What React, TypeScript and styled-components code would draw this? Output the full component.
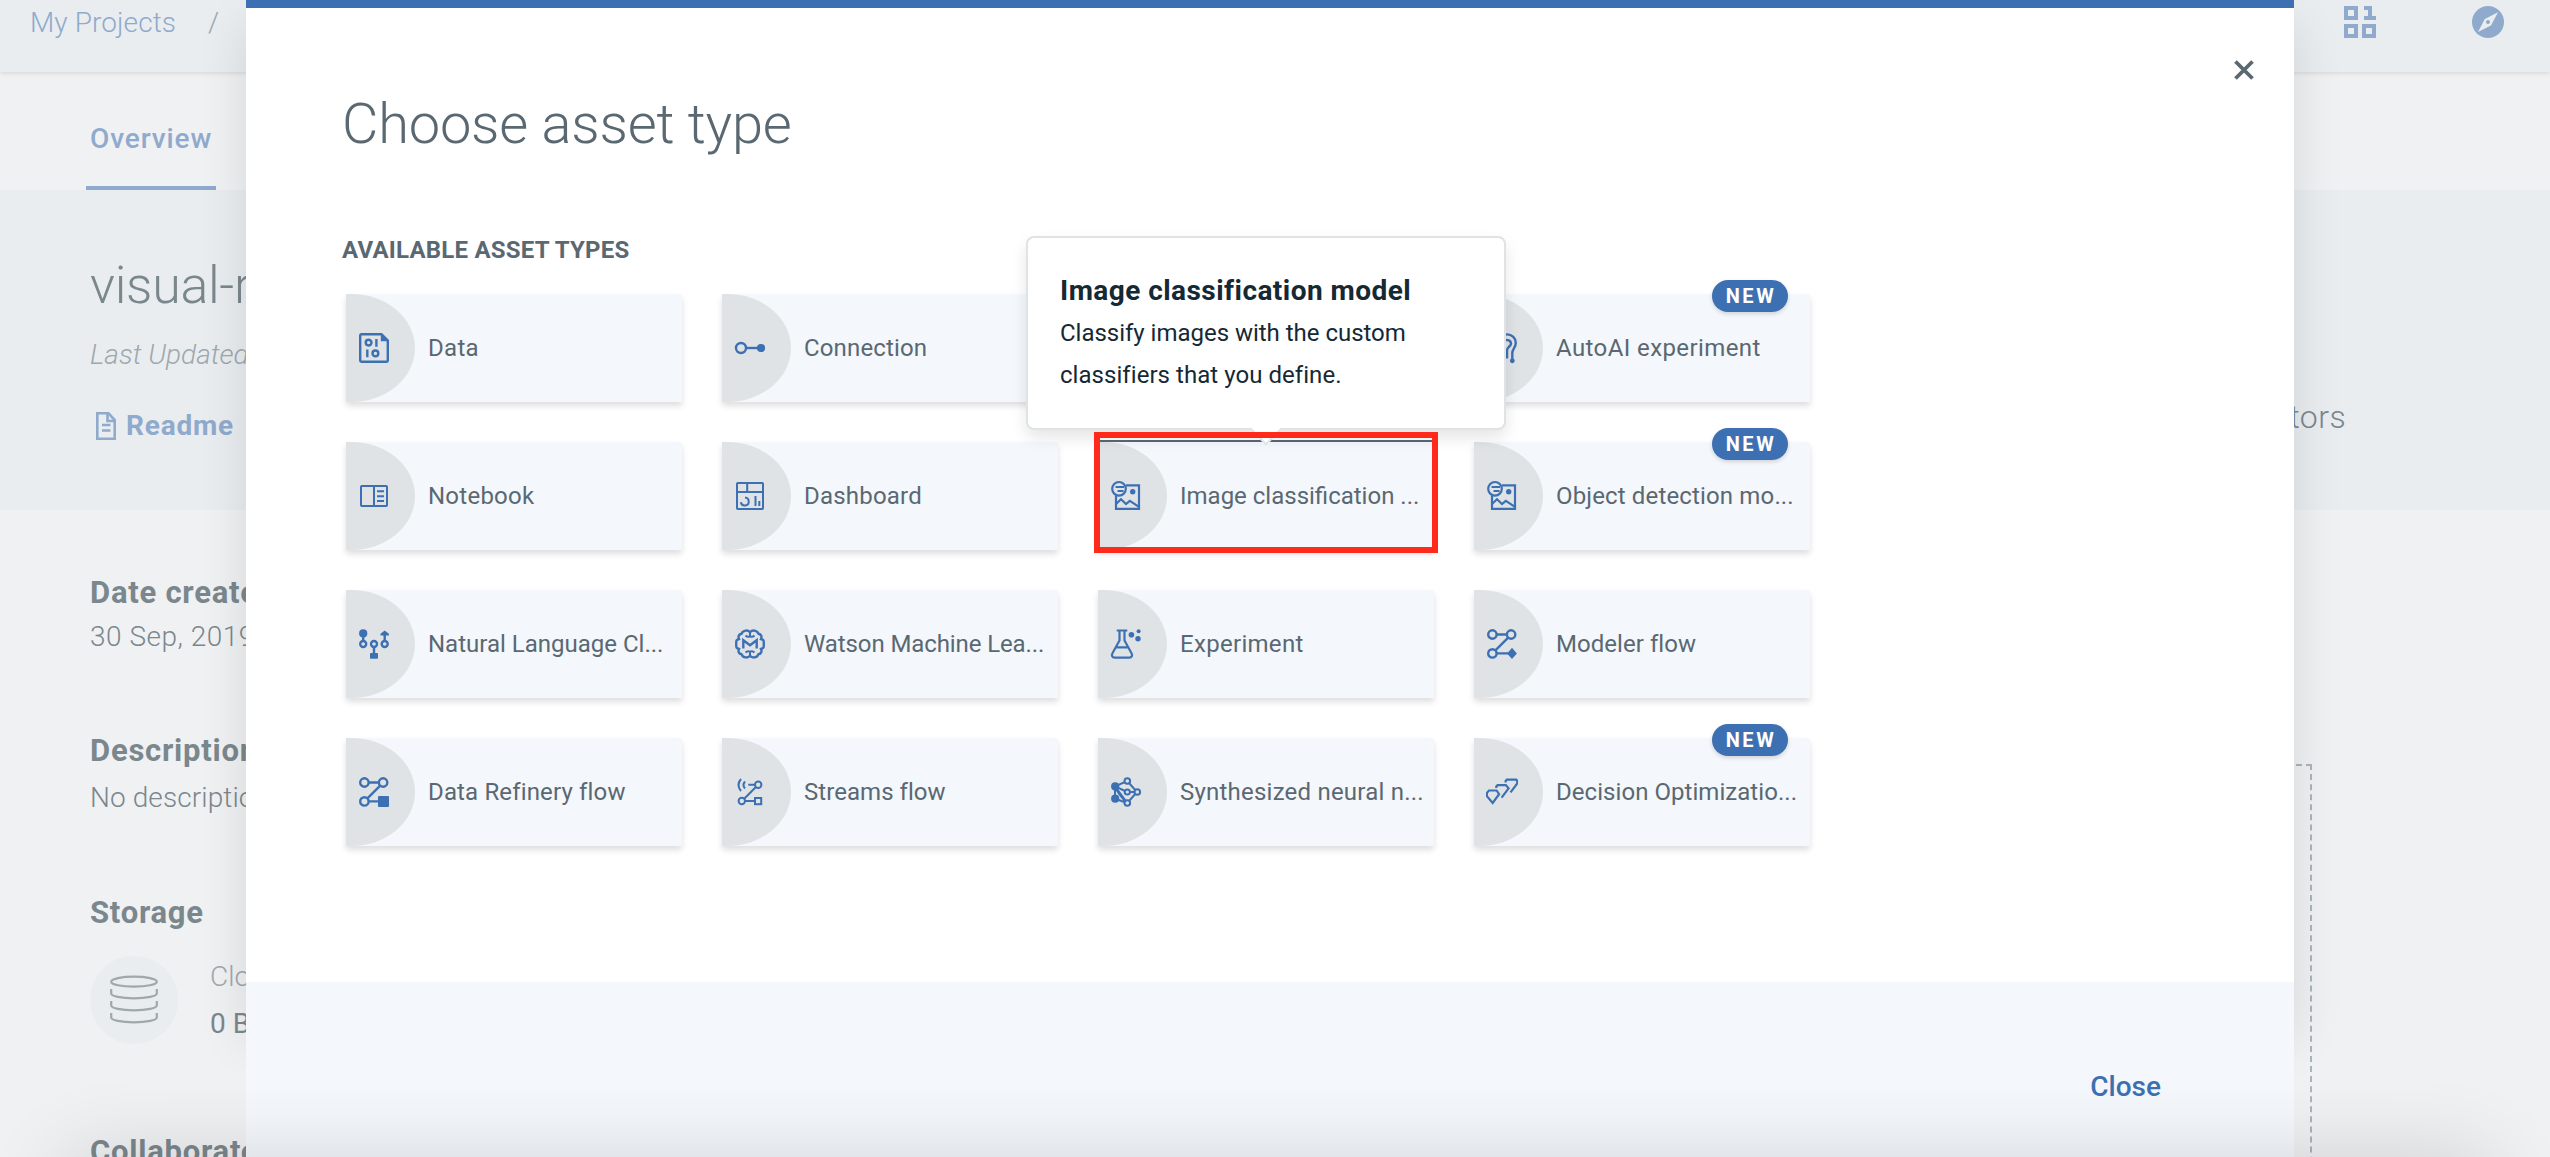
import React from "react";
import styled, { createGlobalStyle } from "styled-components";

const blue = "#3d70b2";
const slate = "#5a6872";
const mutedBlue = "#8faacd";
const mutedText = "#7a878d";
const faintText = "#9ea8ad";

const GlobalStyle = createGlobalStyle`
  * { box-sizing: border-box; }
  body {
    margin: 0;
    font-family: Roboto, "Open Sans", "Liberation Sans", sans-serif;
    overflow: hidden;
  }
`;

const Screen = styled.div`
  position: relative;
  width: 2550px;
  height: 1157px;
  overflow: hidden;
  background: #f0f1f3;
`;

/* ---------- project page behind the dialog ---------- */

const Page = styled.div`
  display: flex;
  flex-direction: column;
  height: 1157px;
  overflow: hidden;
`;

const TopBar = styled.header`
  position: relative;
  display: flex;
  flex: none;
  align-items: center;
  height: 72px;
  padding: 0 46px 28px 30px;
  background: #e9edef;
  box-shadow: 0 1px 5px rgba(0, 0, 0, 0.12);
`;

const Crumb = styled.span<{ $color: string; $spacing?: number }>`
  font-size: 28px;
  font-weight: 300;
  line-height: 45px;
  letter-spacing: ${(p) => p.$spacing ?? 0}px;
  color: ${(p) => p.$color};
`;

const Crumbs = styled.div`
  display: flex;
  gap: 32px;
`;

const TopIcons = styled.div`
  display: flex;
  gap: 96px;
  margin-left: auto;
  color: ${mutedBlue};
`;

const Tabs = styled.nav`
  display: flex;
  flex: none;
  height: 118px;
  padding-left: 86px;
`;

const Tab = styled.div`
  width: 130px;
  padding: 47px 0 0 4px;
  border-bottom: 4px solid ${mutedBlue};
  font-size: 28px;
  font-weight: 500;
  line-height: 40px;
  letter-spacing: 0.9px;
  color: ${mutedBlue};
`;

const Hero = styled.section`
  display: flex;
  flex: none;
  justify-content: space-between;
  height: 320px;
  padding: 66px 204px 0 90px;
  background: #e9edef;
`;

const ProjectName = styled.div`
  font-size: 52px;
  font-weight: 300;
  line-height: 60px;
  letter-spacing: -0.3px;
  color: ${mutedText};
`;

const Updated = styled.div`
  margin-top: 19px;
  font-size: 28px;
  font-style: italic;
  font-weight: 300;
  line-height: 40px;
  color: ${faintText};
`;

const Readme = styled.div`
  display: flex;
  align-items: center;
  gap: 9px;
  margin-top: 31px;
  padding-left: 5px;
  font-size: 28px;
  font-weight: 700;
  line-height: 40px;
  letter-spacing: 0.8px;
  color: ${mutedBlue};
`;

const HeroStat = styled.div`
  margin-top: 141px;
  font-size: 32px;
  font-weight: 300;
  line-height: 40px;
  letter-spacing: 0.4px;
  color: ${mutedText};
`;

const Details = styled.section`
  display: flex;
  flex: 1;
  justify-content: space-between;
  min-height: 0;
  padding: 61px 238px 0 90px;
`;

const Facts = styled.div`
  width: 300px;
`;

const FactTitle = styled.div<{ $top?: number }>`
  margin-top: ${(p) => p.$top ?? 0}px;
  font-size: 31px;
  font-weight: 700;
  line-height: 44px;
  letter-spacing: 0.75px;
  white-space: nowrap;
  color: ${mutedText};
`;

const FactText = styled.div<{ $top: number; $spacing?: number }>`
  margin-top: ${(p) => p.$top}px;
  font-size: 28px;
  font-weight: 300;
  line-height: 40px;
  letter-spacing: ${(p) => p.$spacing ?? 0}px;
  white-space: nowrap;
  color: ${mutedText};
`;

const StorageRow = styled.div`
  display: flex;
  align-items: center;
  gap: 32px;
  height: 94px;
  margin-top: 18px;
`;

const StorageBadge = styled.div`
  display: grid;
  place-items: center;
  width: 88px;
  height: 88px;
  border-radius: 50%;
  background: #e9edef;
`;

const StorageLine = styled.div<{ $faint?: boolean }>`
  font-size: 28px;
  font-weight: ${(p) => (p.$faint ? 300 : 400)};
  line-height: 47px;
  color: ${(p) => (p.$faint ? faintText : mutedText)};
`;

const DropZone = styled.div`
  width: 600px;
  height: 600px;
  margin-top: 193px;
  border: 2px dashed #a9b4bb;
`;

/* ---------- dialog ---------- */

const Backdrop = styled.div`
  position: absolute;
  inset: 0;
  display: flex;
  justify-content: center;
  padding-right: 10px;
`;

const DialogGlow = styled.div`
  position: absolute;
  top: 0;
  left: 246px;
  width: 2048px;
  height: 1018px;
  box-shadow: 0 24px 48px rgba(0, 0, 0, 0.11);
`;

const Dialog = styled.div`
  position: relative;
  display: flex;
  flex-direction: column;
  width: 2048px;
  height: 1157px;
  border-top: 8px solid ${blue};
  background: #fff;
`;

const DialogHeader = styled.div`
  display: flex;
  justify-content: space-between;
  height: 148px;
  padding: 0 40px 0 96px;
`;

const DialogTitle = styled.h1`
  margin: 84px 0 0;
  font-size: 56px;
  font-weight: 300;
  line-height: 64px;
  letter-spacing: -0.2px;
  color: ${slate};
`;

const CloseX = styled.button`
  width: 20px;
  height: 20px;
  margin-top: 52px;
  padding: 0;
  border: 0;
  background: none;
  color: ${slate};
`;

const DialogBody = styled.div`
  height: 826px;
  padding: 78px 0 0 96px;
`;

const SectionTitle = styled.h2`
  margin: 0;
  font-size: 24px;
  font-weight: 700;
  line-height: 32px;
  letter-spacing: 0.22px;
  color: ${slate};
`;

const CardGrid = styled.div`
  display: grid;
  grid-template-columns: repeat(4, 336px);
  grid-auto-rows: 108px;
  gap: 40px;
  margin: 28px 0 0 4px;
`;

const Card = styled.div`
  position: relative;
  display: flex;
  align-items: center;
  background: #f4f7fb;
  box-shadow: 0 4px 6px rgba(0, 0, 0, 0.13);
`;

const IconCap = styled.div`
  display: flex;
  flex: none;
  align-items: center;
  width: 69px;
  height: 108px;
  padding-left: 12px;
  border-radius: 0 64px 64px 0 / 0 54px 54px 0;
  background: #dfe3e6;
  color: ${blue};
`;

const CardLabel = styled.span<{ $spacing: number }>`
  margin-left: 13px;
  font-size: 24px;
  font-weight: 400;
  line-height: 32px;
  letter-spacing: ${(p) => p.$spacing}px;
  white-space: nowrap;
  color: ${slate};
`;

const NewBadge = styled.span`
  position: absolute;
  top: -14px;
  right: 22px;
  width: 76px;
  height: 32px;
  padding-left: 2px;
  border-radius: 16px;
  background: ${blue};
  box-shadow: 0 2px 4px rgba(0, 0, 0, 0.15);
  font-size: 20px;
  font-weight: 700;
  line-height: 33px;
  letter-spacing: 2.6px;
  text-align: center;
  color: #fff;
`;

const HoverLine = styled.span`
  position: absolute;
  top: -2px;
  left: 0;
  right: 0;
  height: 2px;
  background: ${slate};
`;

const Highlight = styled.span`
  position: absolute;
  z-index: 3;
  top: -10px;
  left: -4px;
  width: 344px;
  height: 121px;
  border: 6px solid #ff2a1a;
`;

const Tooltip = styled.div`
  position: absolute;
  z-index: 2;
  left: -72px;
  bottom: 120px;
  width: 480px;
  height: 194px;
  padding: 32px 0 0 32px;
  border: 2px solid #dfe3e6;
  border-radius: 8px;
  background: #fff;
  box-shadow: 0 8px 16px rgba(0, 0, 0, 0.1);
  color: #152934;

  &::after {
    content: "";
    position: absolute;
    left: 227px;
    bottom: -13px;
    width: 20px;
    height: 20px;
    border: solid #dfe3e6;
    border-width: 0 2px 2px 0;
    background: #fff;
    transform: rotate(45deg);
  }
`;

const TooltipTitle = styled.div`
  font-size: 28px;
  font-weight: 700;
  line-height: 42px;
  letter-spacing: 0.45px;
`;

const TooltipLine = styled.div<{ $spacing: number }>`
  font-size: 24px;
  line-height: 42px;
  letter-spacing: ${(p) => p.$spacing}px;
  white-space: nowrap;
`;

const DialogFooter = styled.div`
  display: flex;
  flex: 1;
  justify-content: flex-end;
  align-items: flex-start;
  padding: 85px 133px 0 0;
  background: #f4f7fb;
`;

const CloseLink = styled.button`
  padding: 0;
  border: 0;
  background: none;
  font-family: inherit;
  font-size: 28px;
  font-weight: 500;
  line-height: 40px;
  letter-spacing: 0px;
  color: ${blue};
`;

const BottomShade = styled.div`
  position: absolute;
  top: 1157px;
  left: 66px;
  width: 2424px;
  height: 200px;
  box-shadow: 0 0 84px rgba(0, 0, 0, 0.14);
`;

/* ---------- icons ---------- */

const Glyph = ({ children, w = 2.4 }: { children: React.ReactNode; w?: number }) => (
  <svg width="32" height="32" viewBox="0 0 32 32" fill="none" stroke="currentColor" strokeWidth={w}>
    {children}
  </svg>
);

const solid = { fill: "currentColor", stroke: "none" };

const ImageGlyph = () => (
  <Glyph w={2.2}>
    <path d="M16 5.3h13v23.6H6V15.5" />
    <circle cx="9" cy="8.8" r="6.8" />
    <path d="M5.5 7h8.5M7.5 11h6" strokeWidth="2" />
    <circle cx="22.7" cy="11.7" r="2.7" {...solid} />
    <path d="M6 24l5-4.8 5 4.8 3.8-3.2 9.2 6" />
  </Glyph>
);

const icons: Record<string, React.ReactNode> = {
  data: (
    <Glyph>
      <path d="M23.5 2.2H3.4a1.2 1.2 0 0 0-1.2 1.2v25.2a1.2 1.2 0 0 0 1.2 1.2h25.2a1.2 1.2 0 0 0 1.2-1.2V8.5z" />
      <path d="M22.8 1.2v8h8z" {...solid} />
      <circle cx="10.6" cy="10.6" r="2.9" />
      <path d="M18.4 7v7.8M9.3 17.5v7.8" />
      <circle cx="17.4" cy="21.4" r="2.9" />
    </Glyph>
  ),
  connection: (
    <Glyph>
      <circle cx="7" cy="16" r="5" />
      <path d="M12 16h14" />
      <circle cx="27" cy="16" r="4.1" {...solid} />
    </Glyph>
  ),
  autoai: (
    <Glyph>
      <path d="M18 30v-7c-3 0-6-3-6-7 0-9 5-13.600 9-13.600 5 0 8.800 3.600 8.800 8.300 0 5-3.500 6-3.500 10.300v6" />
      <path d="M18 9.500c1-2.500 7-2 7 2 0 3-4 3.500-4 7v8" />
      <circle cx="26.300" cy="28.800" r="2.400" {...solid} />
    </Glyph>
  ),
  notebook: (
    <Glyph w={2}>
      <rect x="3" y="6" width="26" height="20" rx="0.8" />
      <path d="M16 6v20M19 11.300h7M19 16.200h7M19 21.100h7" />
    </Glyph>
  ),
  dashboard: (
    <Glyph w={2}>
      <rect x="3" y="3" width="26" height="26" rx="0.8" />
      <path d="M3 12h26M13.200 3v9M21.500 16v10M25.300 21v5" />
      <path d="M11 17.500a4 4 0 1 1-4.200 4.800" />
    </Glyph>
  ),
  image: <ImageGlyph />,
  language: (
    <Glyph>
      <circle cx="5.200" cy="5.400" r="4.100" {...solid} />
      <path d="M5.200 8v5M16 19v7M26.700 6v7" />
      <circle cx="5.200" cy="16" r="3" />
      <circle cx="16" cy="16" r="3" />
      <circle cx="26.700" cy="16" r="3" />
      <path d="M26.700 2.400l4.200 3.400v1.700h-8.400V5.800z" {...solid} />
      <rect x="12" y="25" width="8" height="5.800" rx="0.8" {...solid} />
    </Glyph>
  ),
  watson: (
    <Glyph>
      <path d="M16 4.200c-2-2.400-7-2.400-8.400 1.500C4.500 6 4 9 5 11c-2.800 1-2.800 1-2.800 5s0 4 2.800 5c-1 2-.5 5 2.600 5.300 1.400 3.900 6.400 3.900 8.400 1.500 2 2.400 7 2.400 8.400-1.500C27.500 26 28 23 27 21c2.800-1 2.800-1 2.800-5s0-4-2.800-5c1-2 .5-5-2.600-5.300C23 1.800 18 1.800 16 4.200z" />
      <path d="M9.300 20.500v-8.300l6.700 5 6.700-5v8.300" />
      <path d="M16 4v4M11.500 7.500q2 2 4.500.8 2.500 1.200 4.500-.8M16 28v-4M11.500 24.500q2-2 4.500-.8 2.500-1.200 4.500.8" strokeWidth="2" />
    </Glyph>
  ),
  experiment: (
    <Glyph w={2.2}>
      <path d="M6.700 2.500h10.600M9.500 2.500v10L2.600 25c-1.400 2.500-.4 4.600 2 4.600h14.800c2.400 0 3.400-2.100 2-4.600l-6.900-12.500v-10M6 19.400h12" />
      <circle cx="21.400" cy="6.700" r="2.800" {...solid} />
      <circle cx="28.600" cy="3.200" r="2" {...solid} />
      <circle cx="28" cy="10.700" r="2.700" {...solid} />
    </Glyph>
  ),
  modeler: (
    <Glyph>
      <circle cx="6.400" cy="6.500" r="4.200" />
      <circle cx="25.100" cy="6.500" r="4.200" />
      <circle cx="6.400" cy="25.400" r="4.200" />
      <path d="M10.600 6.500h10.300M22.200 9.600L9.400 22.400M10.600 25.400H24" />
      <path d="M26 19.800l4.900 5.600L26 31l-4.900-5.600z" {...solid} />
    </Glyph>
  ),
  refinery: (
    <Glyph>
      <circle cx="6.400" cy="6.500" r="4.200" />
      <circle cx="25.100" cy="6.500" r="4.200" />
      <circle cx="6.400" cy="25.400" r="4.200" />
      <path d="M10.600 6.500h10.300M22.200 9.600L9.400 22.400M10.600 25.400H22" />
      <rect x="20" y="20" width="11" height="11" rx="1" {...solid} />
    </Glyph>
  ),
  streams: (
    <Glyph w={2}>
      <circle cx="24.200" cy="8.700" r="3.200" />
      <circle cx="7.800" cy="25" r="3.200" />
      <rect x="21" y="22" width="6.200" height="6.200" />
      <path d="M14.300 8.700H21M21.900 11L10.200 22.700M11 25h10" />
      <path d="M7 3q-5 6 0 12M11 5.500q-3 3.500 0 7" />
    </Glyph>
  ),
  neural: (
    <Glyph w={2}>
      <path d="M5 10.300L17.300 5 27 16l-9.700 11L5 22.700zM5 10.300L17.300 16H27M5 10.300L17.300 27M5 10.300q3 8 12.300 16.700M17.300 16L5 10.300" />
      <circle cx="17.300" cy="5" r="2.800" fill="#dfe3e6" />
      <circle cx="27.300" cy="16" r="2.800" fill="#dfe3e6" />
      <circle cx="17.300" cy="27" r="2.800" fill="#dfe3e6" />
      <circle cx="17.300" cy="16" r="2.600" fill="#dfe3e6" />
      <circle cx="5.200" cy="10.400" r="4.100" {...solid} />
      <circle cx="5.200" cy="22.700" r="4.100" {...solid} />
    </Glyph>
  ),
  decision: (
    <Glyph w={2.200}>
      <path d="M3 14.500h7.600l2.500 3.700L6.700 27 .9 20.200v-3.400z" />
      <path d="M10.300 12v-1.600l1.300-1.300h8.200l2.800 3.300-7 9.300M19.600 6.500V4.900l1.200-1.200h9.500l.9 1v2.800l-6.600 8.800" />
    </Glyph>
  ),
};

const BinaryGlyph = () => (
  <svg width="32" height="32" viewBox="0 0 32 32" fill="none" stroke="currentColor" strokeWidth="4">
    <path d="M2 2h10v10H2zM2 20h10v10H2zM20 20h10v10H20zM20 2h6v10M20 12h12" />
  </svg>
);

const CompassGlyph = () => (
  <svg width="32" height="32" viewBox="0 0 32 32">
    <circle cx="16" cy="16" r="16" fill="currentColor" />
    <path d="M26 6.200L19 19.500 6 26l6.800-13z" fill="#e9edef" />
    <circle cx="16" cy="16" r="2" fill="currentColor" />
  </svg>
);

const DocGlyph = () => (
  <svg width="22" height="30" viewBox="0 0 22 30" fill="none" stroke="currentColor" strokeWidth="2.600">
    <path d="M13.500 2.300H2.300v25.400h17.400V9z" />
    <path d="M12.500 1.500v8.500h8.500M7 14h8.500M7 19.500h8.500" />
  </svg>
);

const DatabaseGlyph = () => (
  <svg width="48" height="50" viewBox="0 0 48 50" fill="none" stroke="#9ea8ad" strokeWidth="2.200">
    <ellipse cx="24" cy="6.700" rx="22.800" ry="5" />
    <path d="M1.200 14v4.500c0 2.700 10 4.800 22.800 4.800s22.800-2.100 22.800-4.800V14" />
    <path d="M1.200 26v4.500c0 2.700 10 4.800 22.800 4.800s22.800-2.100 22.800-4.800V26" />
    <path d="M1.200 38v4.500c0 2.700 10 4.800 22.800 4.800s22.800-2.100 22.800-4.800V38" />
  </svg>
);

/* ---------- data ---------- */

type Asset = { label: string; icon: string; spacing: number; isNew?: boolean; active?: boolean };

const assets: Asset[] = [
  { label: "Data", icon: "data", spacing: 0.3 },
  { label: "Connection", icon: "connection", spacing: 0.15 },
  { label: "", icon: "image", spacing: 0 },
  { label: "AutoAI experiment", icon: "autoai", spacing: 0.4, isNew: true },
  { label: "Notebook", icon: "notebook", spacing: 0.25 },
  { label: "Dashboard", icon: "dashboard", spacing: 0.2 },
  { label: "Image classification ...", icon: "image", spacing: 0, active: true },
  { label: "Object detection mo...", icon: "image", spacing: 0.15, isNew: true },
  { label: "Natural Language Cl...", icon: "language", spacing: 0 },
  { label: "Watson Machine Lea...", icon: "watson", spacing: -0.1 },
  { label: "Experiment", icon: "experiment", spacing: 0.3 },
  { label: "Modeler flow", icon: "modeler", spacing: 0.05 },
  { label: "Data Refinery flow", icon: "refinery", spacing: 0.15 },
  { label: "Streams flow", icon: "streams", spacing: 0.05 },
  { label: "Synthesized neural n...", icon: "neural", spacing: 0.22 },
  { label: "Decision Optimizatio...", icon: "decision", spacing: 0.05, isNew: true },
];

const AssetCard = ({ label, icon, spacing, isNew, active }: Asset) => (
  <Card>
    <IconCap>{icons[icon]}</IconCap>
    <CardLabel $spacing={spacing}>{label}</CardLabel>
    {isNew && <NewBadge>NEW</NewBadge>}
    {active && (
      <>
        <HoverLine />
        <Tooltip>
          <TooltipTitle>Image classification model</TooltipTitle>
          <TooltipLine $spacing={-0.02}>Classify images with the custom</TooltipLine>
          <TooltipLine $spacing={0.05}>classifiers that you define.</TooltipLine>
        </Tooltip>
        <Highlight />
      </>
    )}
  </Card>
);

export default function App() {
  return (
    <Screen>
      <GlobalStyle />
      <Page>
        <TopBar>
          <Crumbs>
            <Crumb $color={mutedBlue} $spacing={0.1}>My Projects</Crumb>
            <Crumb $color={faintText}>/</Crumb>
          </Crumbs>
          <TopIcons>
            <BinaryGlyph />
            <CompassGlyph />
          </TopIcons>
        </TopBar>
        <Tabs>
          <Tab>Overview</Tab>
        </Tabs>
        <Hero>
          <div>
            <ProjectName>visual-r</ProjectName>
            <Updated>Last Updated</Updated>
            <Readme>
              <DocGlyph />
              Readme
            </Readme>
          </div>
          <HeroStat>Collaborators</HeroStat>
        </Hero>
        <Details>
          <Facts>
            <FactTitle>Date created</FactTitle>
            <FactText $top={2} $spacing={0.5}>30 Sep, 2019</FactText>
            <FactTitle $top={72}>Description</FactTitle>
            <FactText $top={5} $spacing={0.1}>No description</FactText>
            <FactTitle $top={73}>Storage</FactTitle>
            <StorageRow>
              <StorageBadge>
                <DatabaseGlyph />
              </StorageBadge>
              <div>
                <StorageLine $faint>Cloud</StorageLine>
                <StorageLine>0 Bytes</StorageLine>
              </div>
            </StorageRow>
            <FactTitle $top={83}>Collaborators</FactTitle>
          </Facts>
          <DropZone />
        </Details>
      </Page>

      <Backdrop>
        <DialogGlow />
        <Dialog>
          <DialogHeader>
            <DialogTitle>Choose asset type</DialogTitle>
            <CloseX aria-label="Close dialog">
              <svg width="20" height="20" viewBox="0 0 20 20" stroke="currentColor" strokeWidth="3.800">
                <path d="M1.500 1.500l17 17M18.500 1.500l-17 17" />
              </svg>
            </CloseX>
          </DialogHeader>
          <DialogBody>
            <SectionTitle>AVAILABLE ASSET TYPES</SectionTitle>
            <CardGrid>
              {assets.map((a, i) => (
                <AssetCard key={i} {...a} />
              ))}
            </CardGrid>
          </DialogBody>
          <DialogFooter>
            <CloseLink>Close</CloseLink>
          </DialogFooter>
        </Dialog>
      </Backdrop>
      <BottomShade />
    </Screen>
  );
}
